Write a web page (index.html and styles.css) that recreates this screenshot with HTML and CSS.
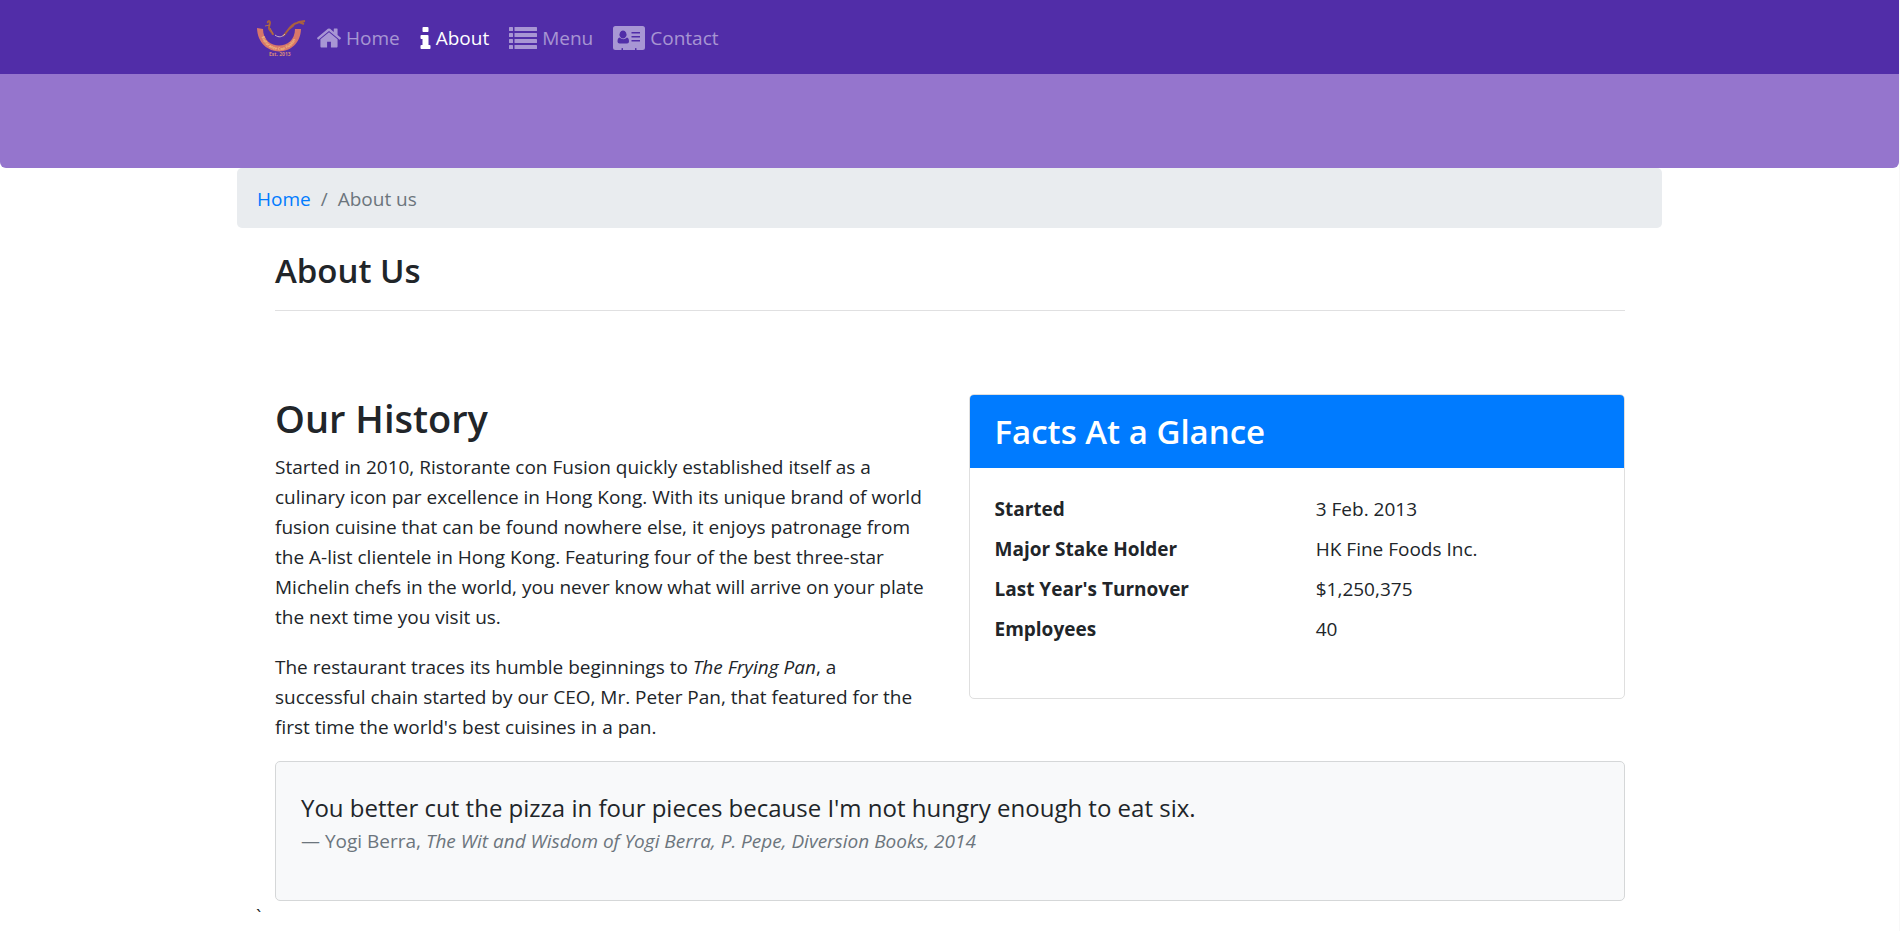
FILE: index.html
```html
<!DOCTYPE html>
<html lang="en">
<head>
<meta charset="utf-8">
<title>Ristorante Con Fusion: About Us</title>
<meta name="viewport" content="width=device-width, initial-scale=1">
<link rel="stylesheet" href="styles.css">
</head>
<body>
<nav class="navbar">
  <div class="container navbar-inner">
    <a class="brand" href="#" aria-label="Ristorante Con Fusion">
      <svg width="50" height="38" viewBox="0 0 50 38">
        <path d="M1 9 L7 10 C7 32 39 32 39 10 L45 10 C44 40 2 40 1 9Z" fill="#d8776a"/>
        <path id="bowl" d="M5 17 C12 36 35 36 41 17" fill="none"/>
        <text class="logo-arc" fill="#f3c27c"><textPath href="#bowl" startOffset="1">Ristorante Con Fusion</textPath></text>
        <path d="M12 4 C11 2 14 1 14 4 L13 8 C12 11 17 13 17 16" fill="none" stroke="#a9603f" stroke-width="2"/>
        <path d="M9 7 L14 6 M14 9 L17 15" fill="none" stroke="#b4704a" stroke-width="1"/>
        <path d="M27 17 C31 14 34 5 41 4 L43 3 L49 2 M43 3 L48 5 M33 10 L38 6" fill="none" stroke="#a9603f" stroke-width="2"/>
        <path d="M19 16 C23 19 26 18 29 15" fill="none" stroke="#cdb3c8" stroke-width="1"/>
        <text class="logo-est" x="13" y="37" fill="#d88b7a">Est. 2013</text>
      </svg>
    </a>
    <ul class="nav">
      <li><a class="nav-link" href="#">
        <svg width="24" height="20" viewBox="89 233 1614 1323" fill="currentColor" aria-hidden="true"><path d="M1472 992v480q0 26-19 45t-45 19h-384v-384h-256v384h-384q-26 0-45-19t-19-45v-480q0-1 .5-3t.5-3l575-474 575 474q1 2 1 6zm223-69l-62 74q-8 9-21 11h-3q-13 0-21-7l-692-577-692 577q-12 8-24 7-13-2-21-11l-62-74q-8-10-7-23.5t11-21.5l719-599q32-26 76-26t76 26l244 204v-195q0-14 9-23t23-9h192q14 0 23 9t9 23v408l219 182q10 8 11 21.5t-7 23.5z"/></svg>
        Home</a></li>
      <li><a class="nav-link active" href="#">
        <svg width="11" height="22" viewBox="576 128 640 1408" fill="currentColor" aria-hidden="true"><path d="M1216 1344v128q0 26-19 45t-45 19h-512q-26 0-45-19t-19-45v-128q0-26 19-45t45-19h64v-384h-64q-26 0-45-19t-19-45v-128q0-26 19-45t45-19h384q26 0 45 19t19 45v576h64q26 0 45 19t19 45zm-128-1152v192q0 26-19 45t-45 19h-256q-26 0-45-19t-19-45v-192q0-26 19-45t45-19h256q26 0 45 19t19 45z"/></svg>
        About</a></li>
      <li><a class="nav-link" href="#">
        <svg width="28" height="22" viewBox="0 0 28 22" fill="currentColor" aria-hidden="true"><rect width="4" height="4" rx=".6"/><rect y="6" width="4" height="4" rx=".6"/><rect y="12" width="4" height="4" rx=".6"/><rect y="18" width="4" height="4" rx=".6"/><rect x="5.5" width="22.5" height="4" rx=".6"/><rect x="5.5" y="6" width="22.5" height="4" rx=".6"/><rect x="5.5" y="12" width="22.5" height="4" rx=".6"/><rect x="5.5" y="18" width="22.5" height="4" rx=".6"/></svg>
        Menu</a></li>
      <li><a class="nav-link" href="#">
        <svg width="32" height="24" viewBox="0 0 32 24" fill="currentColor" aria-hidden="true"><path fill-rule="evenodd" d="M2.500 0h27Q32 0 32 2.500v19Q32 24 29.500 24h-6v-1.500q0-.5-.5-.5h-.5q-.5 0-.5.5V24H10v-1.500q0-.5-.5-.5H9q-.5 0-.5.5V24h-6Q0 24 0 21.500v-19Q0 0 2.500 0zM10 4.500a3.500 4 0 1 0 .01 0zM6.500 11.500Q4.500 12 4.500 15.500q0 2 2 2h7.500q2 0 2-2 0-3.500-2-4-3.700 3.500-7.500 0zM18.500 6H27v1.500h-8.500zM18.500 10H27v1.500h-8.500zM18.500 14H27v1.500h-8.500z"/></svg>
        Contact</a></li>
    </ul>
  </div>
</nav>
<header class="jumbotron"></header>
<main class="container">
  <nav aria-label="breadcrumb">
    <ol class="breadcrumb">
      <li><a href="#">Home</a></li>
      <li aria-current="page">About us</li>
    </ol>
  </nav>
  <div class="content">
    <h3 class="page-title">About Us</h3>
    <div class="columns">
      <section class="history">
        <h2 class="section-title">Our History</h2>
        <p>Started in 2010, Ristorante con Fusion quickly established itself as a culinary icon par excellence in Hong Kong. With its unique brand of world fusion cuisine that can be found nowhere else, it enjoys patronage from the A-list clientele in Hong Kong. Featuring four of the best three-star Michelin chefs in the world, you never know what will arrive on your plate the next time you visit us.</p>
        <p>The restaurant traces its humble beginnings to <em>The Frying Pan</em>, a successful chain started by our CEO, Mr. Peter Pan, that featured for the first time the world's best cuisines in a pan.</p>
      </section>
      <section class="card">
        <h3 class="card-header">Facts At a Glance</h3>
        <dl class="facts">
          <dt>Started</dt><dd>3 Feb. 2013</dd>
          <dt>Major Stake Holder</dt><dd>HK Fine Foods Inc.</dd>
          <dt>Last Year's Turnover</dt><dd>$1,250,375</dd>
          <dt>Employees</dt><dd>40</dd>
        </dl>
      </section>
    </div>
    <div class="card quote-card">
      <blockquote class="quote">
        <p>You better cut the pizza in four pieces because I'm not hungry enough to eat six.</p>
        <footer>— Yogi Berra, <cite>The Wit and Wisdom of Yogi Berra, P. Pepe, Diversion Books, 2014</cite></footer>
      </blockquote>
    </div>
  </div>
  <div class="stray">`</div>
</main>
</body>
</html>
```
FILE: styles.css
```css
* { box-sizing: border-box; }

body {
  margin: 0;
  border-right: 1px solid #f8f8f8;
  background: #fff;
  color: #212529;
  font: 400 19px/30px "Segoe UI", "Open Sans", "Noto Sans", sans-serif;
}

a { color: #007bff; text-decoration: none; }
p { margin: 0 0 20px; }

.container { max-width: 1425px; margin: 0 auto; }

.navbar { background: #512da8; }
.navbar-inner {
  display: flex;
  align-items: center;
  gap: 11px;
  min-height: 74px;
  padding: 2px 19px 0;
}
.brand, .brand svg { display: block; }
.logo-arc { font: 700 4px "Open Sans", sans-serif; }
.logo-est { font: 700 5px "Open Sans", sans-serif; }

.nav {
  display: flex;
  gap: 20px;
  margin: 0;
  padding: 0;
  list-style: none;
}
.nav-link {
  display: flex;
  align-items: center;
  gap: 5px;
  color: rgba(255, 255, 255, 0.5);
}
.nav-link.active { color: #fff; }

.jumbotron {
  height: 94px;
  border-radius: 0 0 6px 6px;
  background: #9575cd;
}

.breadcrumb {
  display: flex;
  margin: 0;
  padding: 16px 20px 14px;
  border-radius: 5px;
  background: #e9ecef;
  color: #6c757d;
  list-style: none;
}
.breadcrumb li + li::before { content: "/"; padding: 0 10px; }

.content { padding: 0 37px 0 38px; }

h2, h3 { margin: 0; font-weight: 600; }
.page-title {
  padding: 22px 0 18px;
  border-bottom: 1px solid #e0e0e1;
  font-size: 33px;
  line-height: 42px;
}
.section-title {
  margin-bottom: 10px;
  font-size: 38px;
  line-height: 48px;
}

.columns {
  display: grid;
  grid-template-columns: 1fr 1fr;
  align-items: start;
  gap: 37px;
  padding-top: 83px;
}
.history { padding-right: 5px; }

.card {
  overflow: hidden;
  border: 1px solid #dfdfdf;
  border-radius: 5px;
}
.card-header {
  padding: 16px 25px 15px;
  background: #007bff;
  color: #fff;
  font-size: 33px;
  line-height: 42px;
}
.facts {
  display: grid;
  grid-template-columns: 1fr 1fr;
  gap: 10px 38px;
  margin: 0;
  padding: 26px 25px 54px;
}
.facts dt { font-weight: 700; }
.facts dd { margin: 0; }

.columns + .card { margin-top: -1px; }
.quote-card {
  padding: 27px 25px 44px;
  border-color: #d5d7d8;
  background: #f8f9fa;
}
.quote { margin: 0; }
.quote p {
  margin: 0;
  font-size: 24px;
  line-height: 37px;
}
.quote footer { color: #6c757d; }

.stray { padding-left: 19px; }
```
